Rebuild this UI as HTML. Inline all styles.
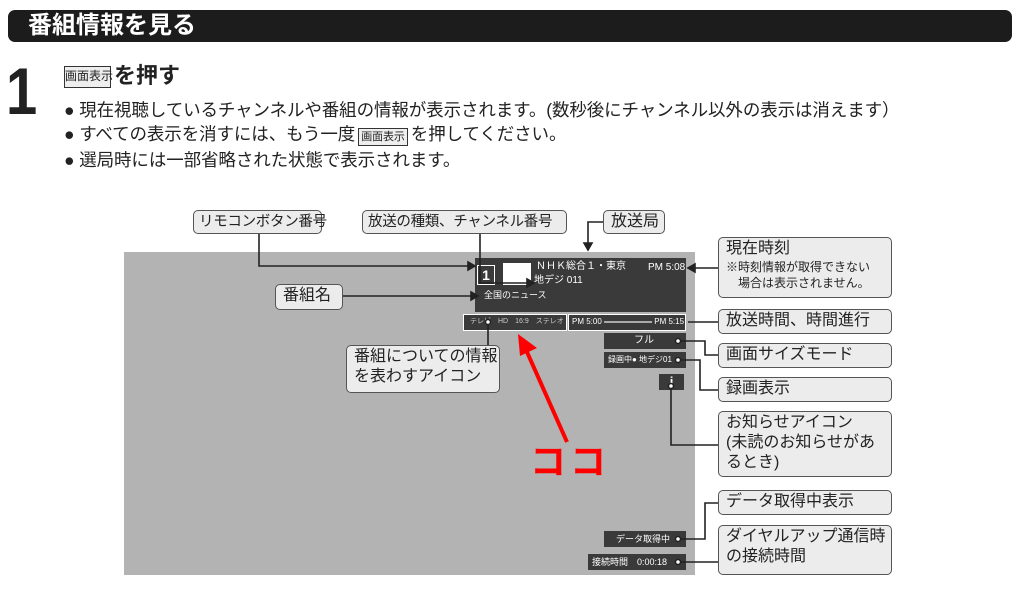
<!DOCTYPE html>
<html><head><meta charset="utf-8"><style>
body{margin:0;width:1024px;height:605px;background:#fff;position:relative;overflow:hidden;font-family:"Liberation Sans","Noto Sans CJK JP",sans-serif;color:#222}
.a{position:absolute;white-space:nowrap}
.lb{position:absolute;background:#ececec;border:1.5px solid #555;border-radius:5px;box-sizing:border-box;font-size:14.5px;line-height:20px;padding:1px 5px;color:#222;white-space:nowrap;letter-spacing:-0.3px}
.r{font-size:16px;padding:1px 7px;letter-spacing:0}
.dk{position:absolute;background:#3a3a3a;color:#fff;font-size:9px;line-height:16px;white-space:nowrap;box-sizing:border-box}
</style></head><body>
<div class="a" style="left:8px;top:10px;width:1004px;height:32px;background:#1c1c1c;border-radius:7px"></div>
<div class="a" style="left:28px;top:11px;font-size:24px;font-weight:bold;color:#fff;line-height:30px">番組情報を見る</div>
<div class="a" style="left:6px;top:58px;font-size:66px;font-weight:bold;line-height:66px;transform:scaleX(0.85);transform-origin:left">1</div>
<div class="a" style="left:64px;top:66px;width:47px;height:22px;border:1.5px solid #333;background:#eee;box-sizing:border-box;font-size:12px;line-height:19px;text-align:center">画面表示</div>
<div class="a" style="left:114px;top:62px;font-size:22px;line-height:28px;font-weight:bold">を押す</div>
<div class="a" style="left:64px;top:100px;font-size:17.5px;line-height:20px;letter-spacing:-0.1px">● 現在視聴しているチャンネルや番組の情報が表示されます。(数秒後にチャンネル以外の表示は消えます）</div>
<div class="a" style="left:64px;top:124px;font-size:17.5px;line-height:20px;letter-spacing:-0.1px">● すべての表示を消すには、もう一度<span style="display:inline-block;border:1.5px solid #333;background:#eee;font-size:11px;line-height:16px;padding:0 2px;margin:0 3px">画面表示</span>を押してください。</div>
<div class="a" style="left:64px;top:150px;font-size:17.5px;line-height:20px;letter-spacing:-0.1px">● 選局時には一部省略された状態で表示されます。</div>

<div class="a" style="left:124px;top:252px;width:571px;height:323px;background:#b3b3b3"></div>
<div class="dk" style="left:475px;top:258px;width:211px;height:54px"></div>
<div class="a" style="left:477px;top:265px;width:16px;height:18px;background:#3a3a3a;border:1.5px solid #fff;color:#fff;font-weight:bold;font-size:14px;line-height:18px;text-align:center">1</div>
<div class="a" style="left:503px;top:263px;width:28px;height:22px;background:#fff"></div>
<div class="a" style="left:536px;top:261px;color:#fff;font-size:10px;line-height:12px">ＮＨＫ総合１・東京</div>
<div class="a" style="left:648px;top:262px;color:#fff;font-size:10px;line-height:12px">PM 5:08</div>
<div class="a" style="left:534px;top:275px;color:#fff;font-size:10px;line-height:12px">地デジ 011</div>
<div class="a" style="left:484px;top:289px;color:#fff;font-size:9px;line-height:12px">全国のニュース</div>
<div class="dk" style="left:463px;top:314px;width:104px;height:17px;border:1.5px solid #fff;font-size:7px;line-height:14px;padding-left:6px;color:#ccc">テレビ　HD　16:9　ステレオ</div>
<div class="dk" style="left:568px;top:314px;width:118px;height:17px;border:1.5px solid #fff;font-size:8px;line-height:14px;padding-left:3px">PM 5:00 <span style="display:inline-block;width:48px;height:2px;background:#aaa;vertical-align:middle"></span> PM 5:15</div>
<div class="dk" style="left:604px;top:333px;width:82px;height:16px;padding-left:30px;font-size:10px">フル</div>
<div class="dk" style="left:604px;top:352px;width:82px;height:16px;padding-left:4px;font-size:8px">録画中● 地デジ01</div>
<div class="dk" style="left:659px;top:374px;width:25px;height:16px;text-align:center;font-weight:bold;font-size:13px">i</div>
<div class="dk" style="left:604px;top:531px;width:82px;height:16px;padding-left:12px;font-size:9px">データ取得中</div>
<div class="dk" style="left:588px;top:554px;width:98px;height:16px;padding-left:4px;font-size:9px">接続時間　0:00:18</div>

<svg class="a" style="left:0;top:0" width="1024" height="605">
<g fill="none" stroke="#222" stroke-width="1.6">
<path d="M259 234V266H474"/><path d="M475 266l-7-4v8z" fill="#222"/>
<path d="M480 234V283H532"/><path d="M534 283l-7-4v8z" fill="#222"/>
<path d="M603 222H588V248"/><path d="M588 250l-4-7h8z" fill="#222"/>
<path d="M343 296H476"/><path d="M478 296l-7-4v8z" fill="#222"/>
<path d="M718 268H690"/><path d="M688 268l7-4v8z" fill="#222"/>
<path d="M718 322H688"/>
<path d="M488 322V345"/>
<path d="M680 341H705V355H718"/>
<path d="M680 360H700V390H718"/>
<path d="M671 387V445H718"/>
<path d="M680 539H705V503H718"/>
<path d="M680 562H718"/>
</g>
<g fill="#fff" stroke="#222" stroke-width="1.5"><circle cx="678" cy="341" r="2.5"/><circle cx="678" cy="360" r="2.5"/><circle cx="671" cy="386" r="2.5"/><circle cx="678" cy="539" r="2.5"/><circle cx="678" cy="562" r="2.5"/><circle cx="488" cy="322" r="2.5"/></g>
<path d="M567 442L527 352" stroke="#f00" stroke-width="4"/><path d="M518 334l19 14-17 8z" fill="#f00"/>
</svg>
<div class="a" style="left:530px;top:440px;font-size:36px;font-weight:bold;color:#f00;line-height:44px;letter-spacing:4px">ココ</div>

<div class="lb" style="left:193px;top:210px;width:129px;height:24px">リモコンボタン番号</div>
<div class="lb" style="left:362px;top:210px;width:205px;height:24px">放送の種類、チャンネル番号</div>
<div class="lb r" style="left:603px;top:210px;width:62px;height:24px">放送局</div>
<div class="lb r" style="left:275px;top:284px;width:68px;height:26px">番組名</div>
<div class="lb r" style="left:346px;top:345px;width:154px;height:48px">番組についての情報<br>を表わすアイコン</div>
<div class="lb r" style="left:718px;top:237px;width:174px;height:61px">現在時刻<br><span style="font-size:12px;line-height:16px;display:block">※時刻情報が取得できない<br>　場合は表示されません。</span></div>
<div class="lb r" style="left:718px;top:309px;width:174px;height:25px">放送時間、時間進行</div>
<div class="lb r" style="left:718px;top:343px;width:174px;height:25px">画面サイズモード</div>
<div class="lb r" style="left:718px;top:377px;width:174px;height:25px">録画表示</div>
<div class="lb r" style="left:718px;top:411px;width:174px;height:66px">お知らせアイコン<br>(未読のお知らせがあ<br>るとき)</div>
<div class="lb r" style="left:718px;top:490px;width:174px;height:25px">データ取得中表示</div>
<div class="lb r" style="left:718px;top:525px;width:174px;height:50px">ダイヤルアップ通信時<br>の接続時間</div>
</body></html>
